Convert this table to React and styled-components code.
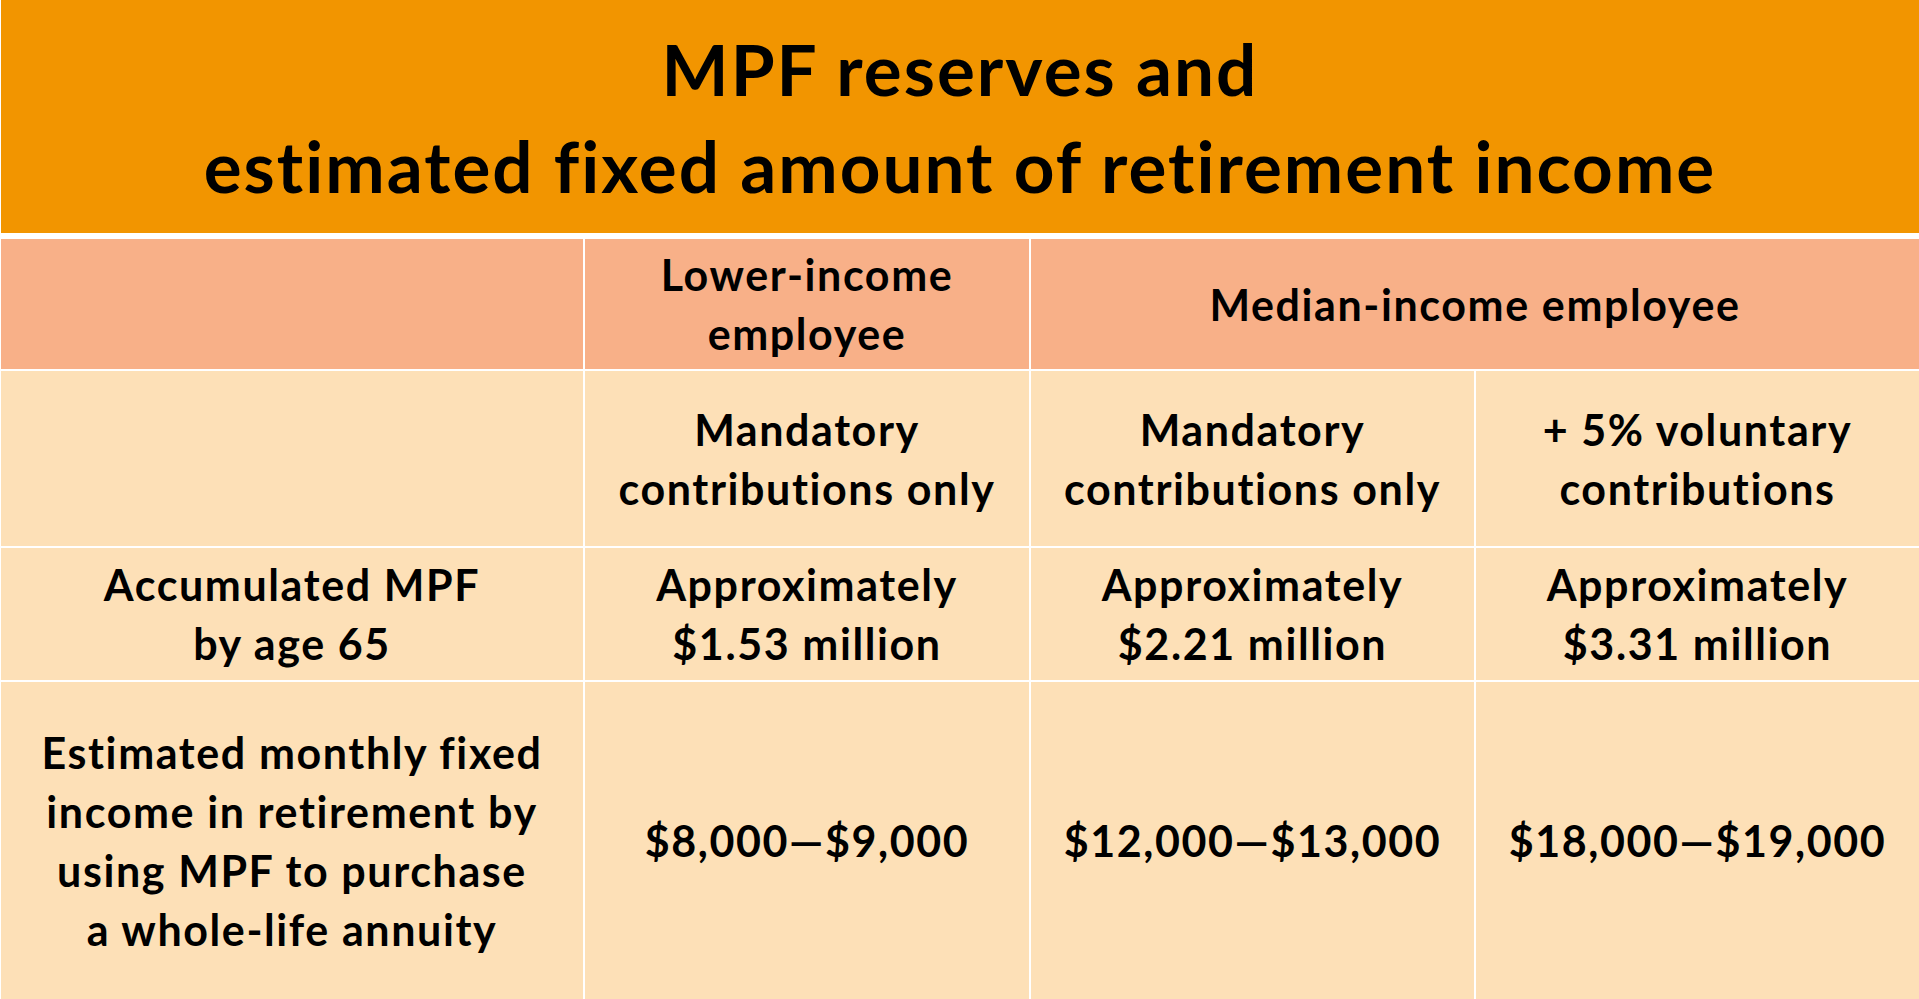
import React from "react";
import styled, { createGlobalStyle } from "styled-components";

const Global = createGlobalStyle`
  html, body { margin: 0; padding: 0; background: #ffffff; }
  body { font-family: Lato, "Open Sans", "Liberation Sans", sans-serif; color: #000; }
`;

const Page = styled.div`
  width: 1919px;
  height: 999px;
  overflow: hidden;
  background: #ffffff;
  display: flex;
  flex-direction: column;
`;

const TitleBar = styled.header`
  height: 233px;
  flex: none;
  background: #f29500;
  margin-left: 1px;
  display: flex;
  align-items: center;
  justify-content: center;
`;

const Title = styled.h1`
  margin: 0;
  font-family: Lato, sans-serif;
  font-weight: 700;
  font-size: 71px;
  line-height: 97px;
  letter-spacing: 2px;
  text-align: center;
  white-space: nowrap;
`;

const Table = styled.div`
  margin-top: 6px;
  padding-left: 1px;
  flex: 1;
  display: grid;
  grid-template-columns: 582px 444px 443px 1fr;
  grid-template-rows: 130px 175px 132px 1fr;
  gap: 2px;
  background: #ffffff;
`;

const Cell = styled.div`
  background: ${(p) => (p.$head ? "#f8b088" : "#fde0b7")};
  grid-column: ${(p) => p.$span || "auto"};
  display: flex;
  align-items: center;
  justify-content: center;
  text-align: center;
  font-family: Lato, sans-serif;
  font-weight: 700;
  font-size: 43px;
  line-height: 59px;
  letter-spacing: 1.6px;
  white-space: nowrap;
`;

const Lines = ({ children }) =>
  children.split("\n").map((l, i, a) => (
    <React.Fragment key={i}>
      {l}
      {i < a.length - 1 && <br />}
    </React.Fragment>
  ));

const rows = [
  {
    head: true,
    cells: [
      { t: "" },
      { t: "Lower-income\nemployee" },
      { t: "Median-income employee", span: "span 2" },
    ],
  },
  {
    cells: [
      { t: "" },
      { t: "Mandatory\ncontributions only" },
      { t: "Mandatory\ncontributions only" },
      { t: "+ 5% voluntary\ncontributions" },
    ],
  },
  {
    cells: [
      { t: "Accumulated MPF\nby age 65" },
      { t: "Approximately\n$1.53 million" },
      { t: "Approximately\n$2.21 million" },
      { t: "Approximately\n$3.31 million" },
    ],
  },
  {
    cells: [
      {
        t: "Estimated monthly fixed\nincome in retirement by\nusing MPF to purchase\na whole-life annuity",
      },
      { t: "$8,000\u2014$9,000" },
      { t: "$12,000\u2014$13,000" },
      { t: "$18,000\u2014$19,000" },
    ],
  },
];

export default function App() {
  return (
    <>
      <Global />
      <Page>
        <TitleBar>
          <Title>
            MPF reserves and
            <br />
            estimated fixed amount of retirement income
          </Title>
        </TitleBar>
        <Table>
          {rows.map((r, ri) =>
            r.cells.map((c, ci) => (
              <Cell key={`${ri}-${ci}`} $head={r.head} $span={c.span}>
                <div>
                  <Lines>{c.t}</Lines>
                </div>
              </Cell>
            ))
          )}
        </Table>
      </Page>
    </>
  );
}
